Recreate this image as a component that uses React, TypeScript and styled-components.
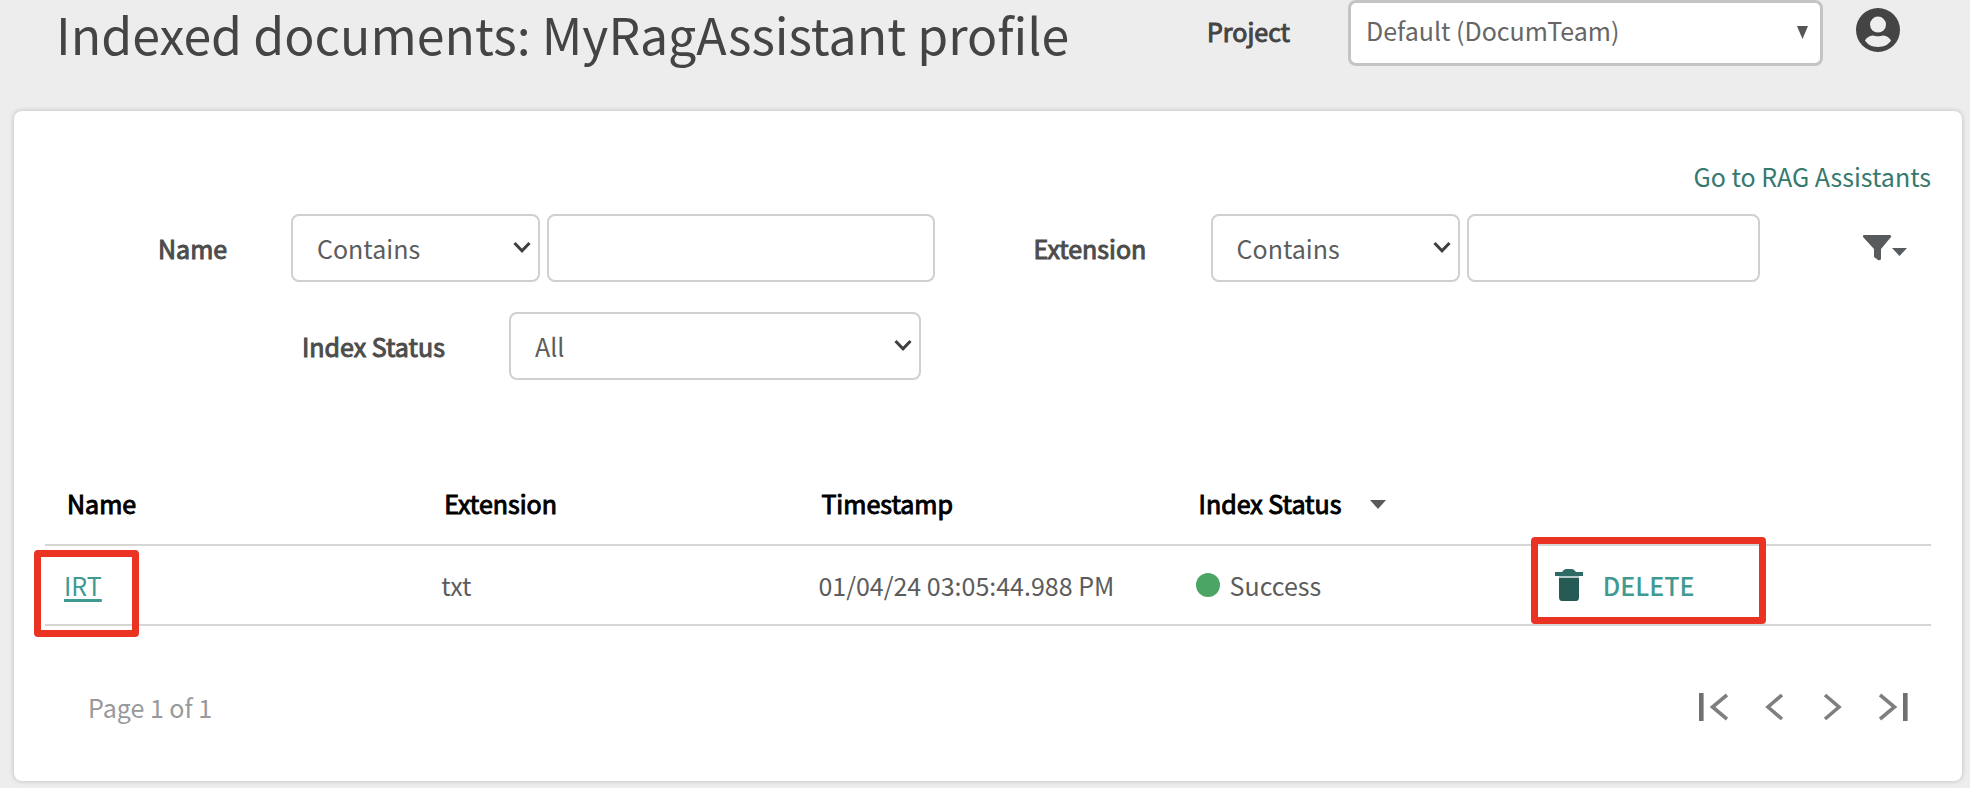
import React from "react";
import styled, { createGlobalStyle, css } from "styled-components";

const GlobalStyle = createGlobalStyle`
  * { box-sizing: border-box; }
  body {
    margin: 0;
    background: #ededed;
    color: #5c5c5c;
    font-family: "Noto Sans CJK SC", "Noto Sans", sans-serif;
    font-size: 25px;
    line-height: 38px;
  }
  button, input, select { font: inherit; color: inherit; }
`;

const heavy = css`
  font-weight: 400;
  -webkit-text-stroke: 1px currentColor;
`;

const Page = styled.div`
  display: flex;
  flex-direction: column;
  min-height: 100vh;
  padding: 0 8px 7px 14px;
`;

const Header = styled.header`
  display: flex;
  align-items: flex-start;
  height: 111px;
  padding: 0 62px 0 42px;
`;

const Title = styled.h1`
  flex: 1;
  margin: 0;
  color: #444;
  font-size: 50px;
  font-weight: 400;
  line-height: 66px;
  white-space: nowrap;
`;

const ProjectLabel = styled.label`
  ${heavy}
  width: 141px;
  color: #444;
  line-height: 62px;
`;

const SelectWrap = styled.div`
  position: relative;
  display: flex;
`;

const ProjectWrap = styled(SelectWrap)`
  width: 475px;
  margin-right: 33px;
`;

const ProjectSelect = styled.select`
  appearance: none;
  width: 100%;
  height: 66px;
  padding: 0 40px 6px 15px;
  border: 3px solid #c4c4c4;
  border-radius: 8px;
  background: #fff;
  color: #666;
`;

const ProjectArrow = styled.svg`
  position: absolute;
  right: 15px;
  top: 26px;
  pointer-events: none;
`;

const IconButton = styled.button`
  display: flex;
  align-items: center;
  padding: 0;
  border: 0;
  background: none;
  cursor: pointer;
`;

const AvatarButton = styled(IconButton)`
  margin-top: 8px;
`;

const Card = styled.main`
  flex: 1;
  padding: 46px 31px 24px;
  border-radius: 8px;
  background: #fff;
  box-shadow: 0 0 5px rgba(0, 0, 0, 0.22);
`;

const TopLink = styled.a`
  display: block;
  width: fit-content;
  margin-left: auto;
  color: #35796f;
  text-decoration: none;
`;

const Filters = styled.form`
  display: flex;
  flex-direction: column;
  gap: 30px;
  margin-top: 19px;
`;

const FilterRow = styled.div`
  display: grid;
  grid-template-columns: 133px 249px minmax(0, 493fr) 177px 249px minmax(0, 403fr) 45px;
  align-items: center;
  padding: 0 23px 0 113px;
`;

const StatusRow = styled.div`
  display: flex;
  align-items: center;
  padding-left: 257px;
`;

const FilterLabel = styled.label<{ $width?: number }>`
  ${heavy}
  width: ${(p) => (p.$width ? `${p.$width}px` : "auto")};
  color: #4c4c4c;
`;

const FieldSelect = styled.select`
  appearance: none;
  width: 100%;
  height: 68px;
  padding: 0 40px 0 24px;
  border: 2px solid #d0d0d0;
  border-radius: 8px;
  background: #fff;
`;

const SelectChevron = styled.svg`
  position: absolute;
  right: 9px;
  top: 27px;
  pointer-events: none;
`;

const StatusWrap = styled(SelectWrap)`
  width: 412px;
`;

const TextField = styled.input<{ $gapRight: number }>`
  min-width: 0;
  height: 68px;
  margin: 0 ${(p) => p.$gapRight}px 0 7px;
  padding: 0 16px;
  border: 2px solid #d0d0d0;
  border-radius: 8px;
`;

const Table = styled.table`
  width: 100%;
  margin-top: 82px;
  border-collapse: separate;
  border-spacing: 0;
  table-layout: fixed;
`;

const HeadCell = styled.th`
  ${heavy}
  padding: 22px 0 22px 22px;
  border-bottom: 2px solid #d6d6d6;
  color: #000;
  text-align: left;
`;

const SortButton = styled(IconButton)`
  gap: 29px;
`;

const Cell = styled.td<{ $flush?: boolean }>`
  position: relative;
  padding: 20px 0 20px ${(p) => (p.$flush ? 1 : 19)}px;
  border-bottom: 2px solid #d6d6d6;
`;

const NameLink = styled.a`
  color: #3f9a92;
  text-decoration: underline;
  text-decoration-thickness: 3px;
  text-underline-offset: 3px;
`;

const Highlight = styled.div<{ $left: number; $top: number; $width: number }>`
  position: absolute;
  left: ${(p) => p.$left}px;
  top: ${(p) => p.$top}px;
  width: ${(p) => p.$width}px;
  height: 87px;
  border: 7px solid #ea3323;
  border-radius: 4px;
  pointer-events: none;
`;

const Status = styled.div`
  display: flex;
  align-items: center;
  gap: 10px;
`;

const Dot = styled.span`
  width: 24px;
  height: 24px;
  border-radius: 50%;
  background: #4ba564;
`;

const DeleteButton = styled(IconButton)`
  gap: 20px;
  color: #3f9a92;
  font-weight: 500;
`;

const Footer = styled.footer`
  display: flex;
  align-items: center;
  justify-content: space-between;
  margin-top: 62px;
  padding: 0 23px 0 43px;
  color: #999;
`;

const Pager = styled.nav`
  display: flex;
  align-items: center;
  gap: 37px;
`;

function Chevron() {
  return (
    <SelectChevron width="18" height="13" viewBox="0 0 18 13" aria-hidden="true">
      <path d="M1.5 2 L9 9.8 L16.5 2" fill="none" stroke="#3f3f3f" strokeWidth="3" />
    </SelectChevron>
  );
}

function OperatorSelect({ label }: { label: string }) {
  return (
    <SelectWrap>
      <FieldSelect aria-label={label} defaultValue="Contains">
        <option>Contains</option>
      </FieldSelect>
      <Chevron />
    </SelectWrap>
  );
}

function PageButton({ label, path, bar, width }: { label: string; path: string; bar?: number; width: number }) {
  return (
    <IconButton type="button" aria-label={label}>
      <svg width={width} height="30" viewBox={`0 0 ${width} 30`}>
        <path d={path} fill="none" stroke="#7f7f7f" strokeWidth="3.6" />
        {bar !== undefined && <rect x={bar} y="1" width="4.6" height="28" fill="#707070" />}
      </svg>
    </IconButton>
  );
}

export default function App() {
  return (
    <>
      <GlobalStyle />
      <Page>
        <Header>
          <Title>Indexed documents: MyRagAssistant profile</Title>
          <ProjectLabel htmlFor="project">Project</ProjectLabel>
          <ProjectWrap>
            <ProjectSelect id="project" defaultValue="Default (DocumTeam)">
              <option>Default (DocumTeam)</option>
            </ProjectSelect>
            <ProjectArrow width="11" height="13" viewBox="0 0 11 13" aria-hidden="true">
              <path d="M0 0 H11 L5.5 13 Z" fill="#555" />
            </ProjectArrow>
          </ProjectWrap>
          <AvatarButton type="button" aria-label="Account">
            <svg width="44" height="44" viewBox="0 0 44 44">
              <circle cx="22" cy="22" r="22" fill="#444" />
              <circle cx="22" cy="16.6" r="8" fill="#ededed" />
              <path
                fill="#ededed"
                d="M9 32.6 C10.5 29.4 14 27.2 17 27.4 C19 28.4 25 28.4 27 27.4 C30 27.2 33.5 29.4 35 32.6 C33 36.4 28 39 22 39 C16 39 11 36.4 9 32.6 Z"
              />
            </svg>
          </AvatarButton>
        </Header>

        <Card>
          <TopLink href="#assistants">Go to RAG Assistants</TopLink>

          <Filters>
            <FilterRow>
              <FilterLabel htmlFor="name">Name</FilterLabel>
              <OperatorSelect label="Name operator" />
              <TextField id="name" type="text" $gapRight={99} />
              <FilterLabel htmlFor="extension">Extension</FilterLabel>
              <OperatorSelect label="Extension operator" />
              <TextField id="extension" type="text" $gapRight={103} />
              <IconButton type="button" aria-label="Filter options">
                <svg width="45" height="26" viewBox="0 0 45 26">
                  <path d="M1 0 H27 Q29 1 28 2 L18 14 V24 Q17 26 15 25 L11 22 V14 L0 2 Q-1 1 1 0 Z" fill="#575b5e" />
                  <path d="M29 13 H44 L36.5 21 Z" fill="#575b5e" />
                </svg>
              </IconButton>
            </FilterRow>
            <StatusRow>
              <FilterLabel htmlFor="status" $width={207}>Index Status</FilterLabel>
              <StatusWrap>
                <FieldSelect id="status" defaultValue="All">
                  <option>All</option>
                </FieldSelect>
                <Chevron />
              </StatusWrap>
            </StatusRow>
          </Filters>

          <Table>
            <thead>
              <tr>
                <HeadCell scope="col">Name</HeadCell>
                <HeadCell scope="col">Extension</HeadCell>
                <HeadCell scope="col">Timestamp</HeadCell>
                <HeadCell scope="col">
                  <SortButton type="button">
                    Index Status
                    <svg width="16" height="14" viewBox="0 0 16 14" aria-hidden="true">
                      <path d="M0 4 H16 L8 13 Z" fill="#575b5e" />
                    </svg>
                  </SortButton>
                </HeadCell>
                <HeadCell as="td" />
              </tr>
            </thead>
            <tbody>
              <tr>
                <Cell>
                  <NameLink href="#irt">IRT</NameLink>
                  <Highlight $left={-11} $top={4} $width={105} />
                </Cell>
                <Cell>txt</Cell>
                <Cell>01/04/24 03:05:44.988 PM</Cell>
                <Cell>
                  <Status>
                    <Dot />
                    Success
                  </Status>
                </Cell>
                <Cell $flush>
                  <DeleteButton type="button">
                    <svg width="28" height="32" viewBox="0 0 28 32" aria-hidden="true">
                      <path d="M0 3 H7 Q9 0 11 0 H17 Q19 0 21 3 H28 V7 H0 Z" fill="#2f6b66" />
                      <path d="M4 7 H24 V9 H4 Z" fill="#b4cbc9" />
                      <path d="M4 9 H24 V28 Q24 32 21 32 H7 Q4 32 4 28 Z" fill="#265a55" />
                    </svg>
                    DELETE
                  </DeleteButton>
                  <Highlight $left={-23} $top={-9} $width={235} />
                </Cell>
              </tr>
            </tbody>
          </Table>

          <Footer>
            <span>Page 1 of 1</span>
            <Pager aria-label="Pagination">
              <PageButton label="First page" width={29} bar={0} path="M28 3 L13.5 15 L28 27" />
              <PageButton label="Previous page" width={20} path="M17 3 L3 15 L17 27" />
              <PageButton label="Next page" width={20} path="M3 3 L17 15 L3 27" />
              <PageButton label="Last page" width={29} bar={24} path="M1 3 L15.5 15 L1 27" />
            </Pager>
          </Footer>
        </Card>
      </Page>
    </>
  );
}
